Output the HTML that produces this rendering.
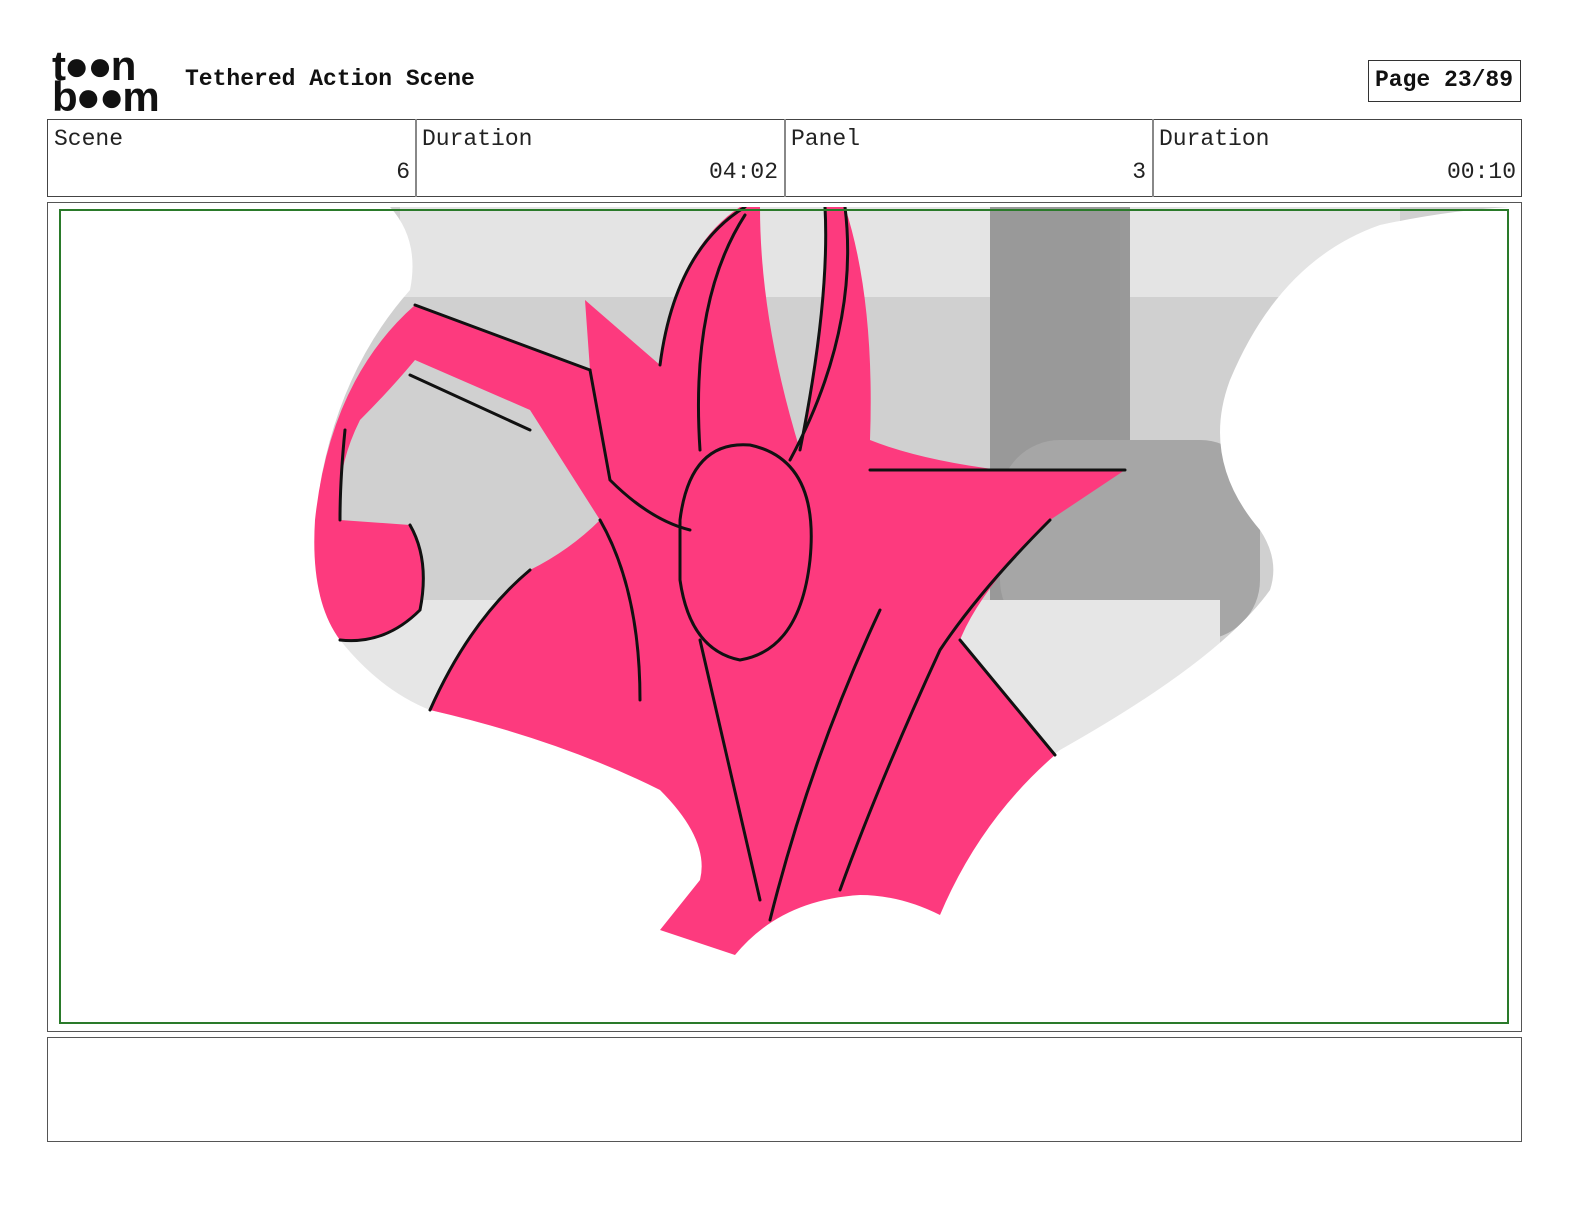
<!DOCTYPE html>
<html><head><meta charset="utf-8"><style>
body{margin:0;width:1584px;height:1224px;background:#fff;position:relative;font-family:"Liberation Mono",monospace;overflow:hidden}
.t{position:absolute;color:#222}
.box{position:absolute;border:1px solid #555;box-sizing:border-box}
</style></head><body>
<div class="t" style="left:52px;top:50px;font:bold 42px/31px 'Liberation Sans',sans-serif;color:#111;letter-spacing:-2px">t●●n<br>b●●m</div>
<div class="t" style="left:185px;top:66px;font:bold 23px 'Liberation Mono',monospace;color:#111">Tethered Action Scene</div>
<div class="box" style="left:1368px;top:60px;width:153px;height:42px;border-color:#333"></div>
<div class="t" style="left:1375px;top:67px;font:bold 23px 'Liberation Mono',monospace;color:#111">Page 23/89</div>
<div class="box" style="left:47px;top:119px;width:1475px;height:78px;border-color:#444"></div>
<div class="box" style="left:415px;top:119px;width:1px;height:78px;border-color:#888"></div>
<div class="box" style="left:784px;top:119px;width:1px;height:78px;border-color:#888"></div>
<div class="box" style="left:1152px;top:119px;width:1px;height:78px;border-color:#888"></div>
<div class="t" style="left:54px;top:126px;font-size:23px">Scene</div>
<div class="t" style="left:422px;top:126px;font-size:23px">Duration</div>
<div class="t" style="left:791px;top:126px;font-size:23px">Panel</div>
<div class="t" style="left:1159px;top:126px;font-size:23px">Duration</div>
<div class="t" style="left:370px;top:159px;font-size:23px;width:40px;text-align:right">6</div>
<div class="t" style="left:680px;top:159px;font-size:23px;width:98px;text-align:right">04:02</div>
<div class="t" style="left:1090px;top:159px;font-size:23px;width:56px;text-align:right">3</div>
<div class="t" style="left:1410px;top:159px;font-size:23px;width:106px;text-align:right">00:10</div>
<div class="box" style="left:47px;top:202px;width:1475px;height:830px;border-color:#555"></div>
<svg style="position:absolute;left:0;top:0" width="1584" height="1224">
<defs><clipPath id="c"><rect x="60" y="207" width="1448" height="816"/></clipPath></defs>
<g clip-path="url(#c)">
<rect x="320" y="207" width="1190" height="560" fill="#d0d0d0"/>
<rect x="400" y="207" width="1000" height="90" fill="#e4e4e4"/>
<rect x="990" y="207" width="140" height="400" fill="#999"/>
<rect x="1000" y="440" width="260" height="200" rx="60" fill="#a6a6a6"/>
<rect x="320" y="600" width="900" height="170" fill="#e6e6e6"/>
<path d="M60 207 H390 Q420 240 410 290 Q330 380 315 520 Q310 600 340 640 Q380 690 430 710 Q560 740 660 790 Q710 840 700 880 L660 930 L735 955 Q780 900 860 895 Q910 895 940 915 Q970 820 1060 750 Q1220 660 1270 590 Q1280 560 1260 530 Q1200 460 1230 380 Q1280 260 1380 225 Q1450 210 1510 207 V1023 H60Z" fill="#fff"/>
<path d="M415 305 L590 370 L585 300 L660 365 Q675 250 740 207 L760 207 Q760 320 800 450 Q830 300 825 207 L845 207 Q875 300 870 440 Q920 460 1000 470 L1125 470 L1050 520 Q980 590 960 640 L1055 755 Q980 820 940 915 Q900 895 860 895 Q780 900 735 955 L660 930 L700 880 Q710 840 660 790 Q560 740 430 710 Q470 620 530 570 Q570 550 600 520 L530 410 L415 360 Q390 390 360 420 Q335 470 340 520 L410 525 Q430 560 420 610 Q385 645 340 640 Q310 600 315 520 Q330 380 415 305Z" fill="#fd3a7e"/>
<g fill="none" stroke="#111" stroke-width="3" stroke-linecap="round">
<path d="M415 305 L590 370 M410 375 L530 430 M345 430 Q340 480 340 520 M410 525 Q430 560 420 610 Q385 645 340 640"/>
<path d="M660 365 Q675 250 745 207 M700 450 Q690 300 745 215 M800 450 Q830 300 825 207 M790 460 Q860 330 845 207"/>
<path d="M680 520 Q690 440 750 445 Q820 460 810 560 Q800 650 740 660 Q690 650 680 580Z"/>
<path d="M870 470 Q1000 470 1125 470 M1050 520 Q980 590 940 650 Q880 780 840 890 M770 920 Q810 760 880 610"/>
<path d="M430 710 Q470 620 530 570 M600 520 Q640 590 640 700 M700 640 L760 900 M960 640 L1055 755 M590 370 L610 480 Q650 520 690 530"/>
</g>
</g>
<rect x="60" y="210" width="1448" height="813" fill="none" stroke="#2a7a2a" stroke-width="2"/>
</svg>
<div class="box" style="left:47px;top:1037px;width:1475px;height:105px;border-color:#555"></div>
</body></html>
